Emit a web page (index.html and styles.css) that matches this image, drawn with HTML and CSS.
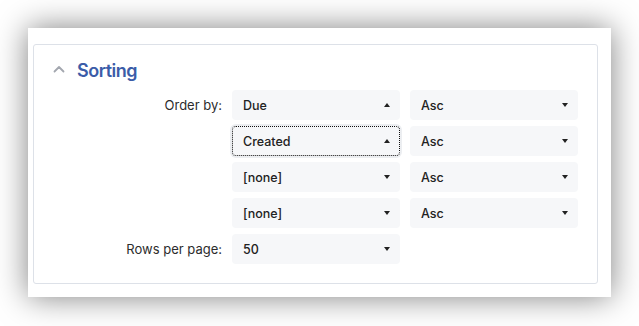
FILE: index.html
```html
<!DOCTYPE html>
<html>
<head>
<meta charset="utf-8">
<link rel="stylesheet" href="styles.css">
</head>
<body>
<div class="window">
  <section class="card">
    <header class="card-head">
      <svg class="chev" width="12" height="8" viewBox="0 0 12 8"><path d="M1.5 6.5 L6 2 L10.5 6.5" fill="none" stroke="#a3a7af" stroke-width="1.8" stroke-linecap="round" stroke-linejoin="round"/></svg>
      <h2 class="title">Sorting</h2>
    </header>
    <div class="grid">
      <label class="lbl">Order by:</label>
      <div class="sel"><span>Due</span><i class="caret up"></i></div>
      <div class="sel"><span>Asc</span><i class="caret"></i></div>

      <span></span>
      <div class="sel focus"><span>Created</span><i class="caret up"></i></div>
      <div class="sel"><span>Asc</span><i class="caret"></i></div>

      <span></span>
      <div class="sel"><span>[none]</span><i class="caret"></i></div>
      <div class="sel"><span>Asc</span><i class="caret"></i></div>

      <span></span>
      <div class="sel"><span>[none]</span><i class="caret"></i></div>
      <div class="sel"><span>Asc</span><i class="caret"></i></div>

      <label class="lbl">Rows per page:</label>
      <div class="sel"><span>50</span><i class="caret"></i></div>
    </div>
  </section>
</div>
</body>
</html>
```
FILE: styles.css
```css
html, body { margin: 0; padding: 0; background: #fff; }
body {
  padding: 28px 0 0 28px;
  height: 326px;
  box-sizing: border-box;
  font-family: Inter, "Noto Sans", sans-serif;
}
.window {
  width: 583px;
  height: 269px;
  box-sizing: border-box;
  background: #fff;
  box-shadow: 0 0 30px rgba(0,0,0,0.5);
  padding: 16px 13px 0 5px;
}
.card {
  border: 1px solid #dde1e8;
  border-radius: 3px;
  padding: 0 19px 19px 19px;
}
.card-head {
  height: 45px;
  display: flex;
  align-items: center;
  padding-top: 5px;
  box-sizing: border-box;
}
.chev { margin-right: 12px; margin-top: -2px; }
.title {
  margin: 0;
  font-size: 18px;
  font-weight: 600;
  color: #3b5ca8;
  letter-spacing: -0.5px;
}
.grid {
  display: grid;
  grid-template-columns: 169px 168px 168px;
  grid-auto-rows: 30px;
  column-gap: 10px;
  row-gap: 6px;
}
.lbl {
  display: flex;
  align-items: center;
  justify-content: flex-end;
  font-size: 13px;
  color: #2c2c2c;
}
.sel {
  display: flex;
  align-items: center;
  justify-content: space-between;
  background: #f6f7f9;
  border-radius: 4px;
  padding: 0 10px 0 11px;
  font-size: 12.5px;
  font-weight: 500;
  color: #222;
}
.sel.focus {
  outline: 1px dotted #111;
  outline-offset: -1px;
  box-shadow: 0 0 0 2px #eceef1;
}
.caret {
  width: 0; height: 0;
  border-left: 3.5px solid transparent;
  border-right: 3.5px solid transparent;
  border-top: 4px solid #222;
}
.caret.up {
  border-top: 0;
  border-bottom: 4px solid #222;
}
```
